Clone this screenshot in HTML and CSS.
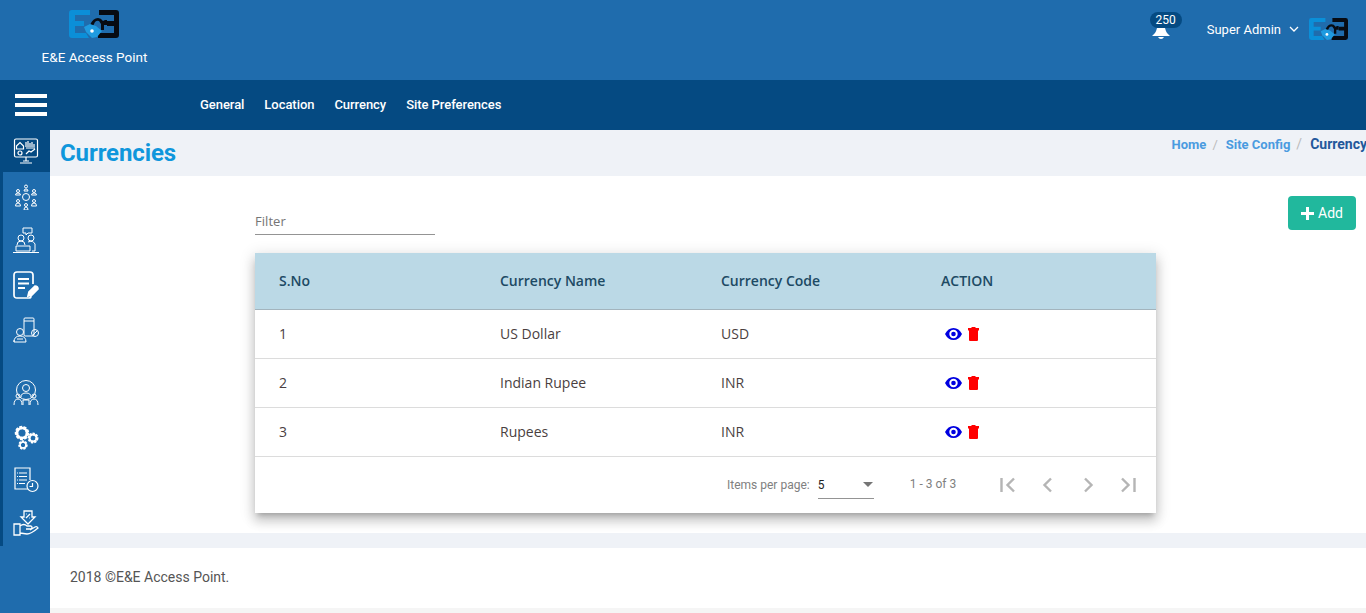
FILE: index.html
```html
<!DOCTYPE html>
<html lang="en">
<head>
  <meta charset="UTF-8" />
  <title>Currencies</title>
  <link rel="stylesheet" href="styles.css">
</head>
<body>
  <svg class="defs" width="0" height="0">
    <symbol id="logo" viewBox="0 0 50 28">
      <path d="M3 0h18v5H6v6h9v5H6v7h11l3 5H3q-3 0-3-3V3q0-3 3-3z" fill="#0b8fd8"/>
      <path d="M30 0h17q3 0 3 3v22q0 3-3 3H29v-5h16v-7h-7v-5h7V5H30z" fill="#070b12"/>
      <path d="M21 15q3-7 8-7 3 0 5 3l2-1h2v5h-3v5h-3v-6l-2-3q-2-1-4 1l-2 4z" fill="#070b12"/>
      <path d="M15 17l6-3 6 2 6 5-5 6-5 1-6-6z" fill="#1f9be0"/>
      <circle cx="23" cy="21" r="1.800" fill="#fff"/>
    </symbol>
  </svg>

  <header class="topbar">
    <div class="brand">
      <svg class="brand-logo"><use href="#logo"/></svg>
      <div class="brand-name">E&amp;E Access Point</div>
    </div>
    <div class="user-area">
      <div class="bell">
        <span class="bell-count">250</span>
        <svg width="18" height="11" viewBox="0 0 18 11"><path d="M5 0h8q1 4 2 5l3 3H0l3-3q1-1 2-5zM6 9h6q-1 2-3 2T6 9z" fill="#fff"/></svg>
      </div>
      <span class="user-name">Super Admin</span>
      <svg class="chev" width="10" height="6" viewBox="0 0 10 6"><path d="M1 1l4 4 4-4" fill="none" stroke="#fff" stroke-width="1.3"/></svg>
      <svg class="user-logo"><use href="#logo"/></svg>
    </div>
  </header>

  <nav class="navbar">
    <div class="burger"><i></i><i></i><i></i></div>
    <a>General</a>
    <a>Location</a>
    <a>Currency</a>
    <a>Site Preferences</a>
  </nav>

  <div class="layout">
    <aside class="sidebar">
      <div class="side-top">
        <svg width="26" height="26" viewBox="0 0 26 26" fill="none" stroke="#fff" stroke-width="1.200"><rect x="1.500" y="1" width="23" height="18" rx="1.500"/><path d="M3.500 8l3.500-3.500L10.500 8v3h-7zM10 23h6M13 19v4M7 25h12"/><circle cx="7" cy="15" r="2"/><path d="M13 9V4M15 9V3M17 9V5M19 9V4M21 9V6M13 16l3-3 2 1 4-3M13 10h9"/></svg>
      </div>
      <div class="side-list">
        <svg width="26" height="26" viewBox="0 0 26 26" fill="none" stroke="#fff"><circle cx="13" cy="13" r="3.500"/><circle cx="13" cy="2.500" r="1.500"/><path d="M11 7q0-2 2-2t2 2z"/><circle cx="5" cy="7" r="1.500"/><path d="M2.500 11q0-2 2.500-2t2.500 2z"/><circle cx="21" cy="7" r="1.500"/><path d="M18.500 11q0-2 2.500-2t2.500 2z"/><circle cx="5" cy="17" r="1.500"/><path d="M2.500 22h5q0-3-2.500-3t-2.500 3z"/><circle cx="21" cy="17" r="1.500"/><path d="M18.500 22h5q0-3-2.500-3t-2.500 3z"/><circle cx="13" cy="21" r="1.500"/><path d="M11 26h4q0-3-2-3t-2 3z"/></svg>
        <svg width="26" height="27" viewBox="0 0 26 27" fill="none" stroke="#fff"><path d="M10 1h9v5h-4l-2 2V6h-3z"/><circle cx="8" cy="11" r="3"/><circle cx="18" cy="11" r="3"/><path d="M4 18q0-4 4-4t4 4M15 15q5-2 7 2v7h-3"/><path d="M3 19h14v5H3zM0 25.500h26"/></svg>
        <svg width="26" height="28" viewBox="0 0 26 28" fill="none" stroke="#fff" stroke-width="1.700"><path d="M18 21v4q0 2-2 2H4q-3 0-3-3V4q0-3 3-3h13q3 0 3 3v9"/><path d="M5 8h11M5 12.500h11M5 17h7" stroke-width="2"/><path d="M15 25l1-4 6-6q3 0 3 3l-6 6z" fill="#fff"/></svg>
        <svg width="26" height="28" viewBox="0 0 26 28" fill="none" stroke="#fff"><rect x="11" y="2" width="10" height="18" rx="1"/><path d="M11 5h10"/><circle cx="22" cy="17" r="3.500"/><path d="M20 19l4-4"/><circle cx="7" cy="16" r="3.500"/><path d="M1 26q0-6 6-6t6 6zM4 23h6M1 26v-2"/></svg>
        <svg class="gap" width="26" height="28" viewBox="0 0 26 28" fill="none" stroke="#fff"><circle cx="13" cy="11" r="9.500"/><circle cx="13" cy="9" r="3.500"/><path d="M8 18q0-4 5-4t5 4"/><circle cx="5" cy="17" r="2"/><circle cx="21" cy="17" r="2"/><path d="M1 26q0-6 4-6t4 6M17 26q0-6 4-6t4 6M10 26v-5h6v5"/></svg>
        <svg width="26" height="26" viewBox="0 0 26 26" fill="#fff"><circle cx="9" cy="9" r="5.500" fill="none" stroke="#fff" stroke-width="3.500" stroke-dasharray="2.600 1.200"/><circle cx="9" cy="9" r="5" fill="none" stroke="#fff" stroke-width="2.500"/><circle cx="20" cy="14" r="4" fill="none" stroke="#fff" stroke-width="3" stroke-dasharray="2 1"/><circle cx="20" cy="14" r="3.500" fill="none" stroke="#fff" stroke-width="2"/><circle cx="10" cy="21" r="3.500" fill="none" stroke="#fff" stroke-width="2.500" stroke-dasharray="2 1"/><circle cx="10" cy="21" r="3" fill="none" stroke="#fff" stroke-width="1.500"/></svg>
        <svg width="26" height="26" viewBox="0 0 26 26" fill="none" stroke="#fff" stroke-width="1.200"><path d="M15 22H2V1h15v12"/><path d="M6 6h8M6 9.500h8M6 13h8M6 16.500h6M4 6h1M4 9.500h1M4 13h1M4 16.500h1"/><circle cx="19.500" cy="19" r="5.500"/><path d="M19.500 16v3.500h-3"/></svg>
        <svg width="26" height="26" viewBox="0 0 26 26" fill="none" stroke="#fff" stroke-width="1.300"><path d="M11 1h8v6h3l-7 7-7-7h3z"/><path d="M13 8l4-4M13 4h.5M16.500 8h.5"/><path d="M1 14h6v11H1zM7 16q4-3 7 0h4q2 1 0 3h-5M7 23l7 1q4 0 11-6q-1-2-3-1l-5 3"/></svg>
      </div>
    </aside>

    <main class="main">
      <div class="page-head">
        <h1>Currencies</h1>
        <ul class="crumbs">
          <li>Home</li>
          <li>Site Config</li>
          <li class="current">Currency</li>
        </ul>
      </div>

      <section class="content">
        <div class="filter-row">
          <div class="filter">Filter</div>
          <button class="add-btn"><svg width="13" height="13" viewBox="0 0 13 13"><path d="M5 0h3v5h5v3H8v5H5V8H0V5h5z" fill="#fff"/></svg>Add</button>
        </div>

        <div class="table-card">
          <div class="row head">
            <div>S.No</div><div>Currency Name</div><div>Currency Code</div><div>ACTION</div>
          </div>
          <div class="row">
            <div>1</div><div>US Dollar</div><div>USD</div>
            <div class="actions">
              <svg width="17" height="12" viewBox="0 0 17 12"><path fill-rule="evenodd" d="M8.500 0Q14 0 17 6q-3 6-8.500 6T0 6Q3 0 8.500 0zM8.500 1.800a4.200 4.200 0 1 0 0 8.400 4.200 4.200 0 0 0 0-8.400z" fill="#0000e0"/><circle cx="8.500" cy="6" r="2.300" fill="#0000e0"/></svg>
              <svg width="11" height="14" viewBox="0 0 11 14"><path d="M3.500 0h4v1H11v2.500H0V1h3.500zM1 3.500h9V13q0 1-1 1H2q-1 0-1-1z" fill="#f00"/></svg>
            </div>
          </div>
          <div class="row">
            <div>2</div><div>Indian Rupee</div><div>INR</div>
            <div class="actions">
              <svg width="17" height="12" viewBox="0 0 17 12"><path fill-rule="evenodd" d="M8.500 0Q14 0 17 6q-3 6-8.500 6T0 6Q3 0 8.500 0zM8.500 1.800a4.200 4.200 0 1 0 0 8.400 4.200 4.200 0 0 0 0-8.400z" fill="#0000e0"/><circle cx="8.500" cy="6" r="2.300" fill="#0000e0"/></svg>
              <svg width="11" height="14" viewBox="0 0 11 14"><path d="M3.500 0h4v1H11v2.500H0V1h3.500zM1 3.500h9V13q0 1-1 1H2q-1 0-1-1z" fill="#f00"/></svg>
            </div>
          </div>
          <div class="row">
            <div>3</div><div>Rupees</div><div>INR</div>
            <div class="actions">
              <svg width="17" height="12" viewBox="0 0 17 12"><path fill-rule="evenodd" d="M8.500 0Q14 0 17 6q-3 6-8.500 6T0 6Q3 0 8.500 0zM8.500 1.800a4.200 4.200 0 1 0 0 8.400 4.200 4.200 0 0 0 0-8.400z" fill="#0000e0"/><circle cx="8.500" cy="6" r="2.300" fill="#0000e0"/></svg>
              <svg width="11" height="14" viewBox="0 0 11 14"><path d="M3.500 0h4v1H11v2.500H0V1h3.500zM1 3.500h9V13q0 1-1 1H2q-1 0-1-1z" fill="#f00"/></svg>
            </div>
          </div>
          <div class="pager">
            <span class="pager-label">Items per page:</span>
            <div class="pager-select"><span>5</span><i class="caret"></i></div>
            <span class="pager-range">1 - 3 of 3</span>
            <div class="pager-btns">
              <svg width="16" height="16" viewBox="0 0 16 16"><path d="M1.500 1v14M14 1.500L7.500 8l6.500 6.500" fill="none" stroke="#b5b5b5" stroke-width="2.400"/></svg>
              <svg width="16" height="16" viewBox="0 0 16 16"><path d="M11 1.500L4.500 8l6.500 6.500" fill="none" stroke="#b5b5b5" stroke-width="2.400"/></svg>
              <svg width="16" height="16" viewBox="0 0 16 16"><path d="M5 1.500L11.500 8 5 14.500" fill="none" stroke="#b5b5b5" stroke-width="2.400"/></svg>
              <svg width="16" height="16" viewBox="0 0 16 16"><path d="M14.500 1v14M2 1.500L8.500 8 2 14.500" fill="none" stroke="#b5b5b5" stroke-width="2.400"/></svg>
            </div>
          </div>
        </div>
      </section>

      <footer class="footer">2018 ©E&amp;E Access Point.</footer>
    </main>
  </div>
</body>
</html>
```

FILE: styles.css
```css
body {
  margin: 0;
  height: 613px;
  overflow: hidden;
  font-family: "Open Sans", sans-serif;
  background: #eff2f7;
}

.defs {
  position: absolute;
}

.topbar {
  height: 80px;
  background: #1f6cad;
  display: flex;
  justify-content: space-between;
  color: #fff;
  font-family: Roboto, sans-serif;
}

.brand {
  width: 189px;
  padding-top: 10px;
  text-align: center;
}

.brand-logo {
  display: block;
  width: 50px;
  height: 28px;
  margin-left: 69px;
}

.brand-name {
  font-size: 13.500px;
  line-height: 17px;
  margin-top: 11px;
}

.user-area {
  display: flex;
  align-items: center;
  height: 58px;
  padding-right: 18px;
}

.bell {
  width: 32px;
  margin: 12px 25px 0 0;
  align-self: flex-start;
  display: flex;
  flex-direction: column;
}

.bell-count {
  background: #054a82;
  border-radius: 9px;
  font-size: 12px;
  line-height: 16px;
  text-align: center;
}

.bell svg {
  margin-left: 2px;
}

.user-name {
  font-size: 13px;
  margin-right: 8px;
}

.chev {
  margin-right: 10px;
}

.user-logo {
  width: 39px;
  height: 22px;
}

.navbar {
  height: 50px;
  background: #054a82;
  display: flex;
  align-items: center;
  gap: 20px;
  padding: 0 0 2px 15px;
  box-sizing: border-box;
  color: #fff;
  font-family: Roboto, sans-serif;
  font-size: 13px;
  font-weight: 500;
  letter-spacing: -0.05px;
}

.burger {
  width: 32px;
  margin-right: 133px;
  margin-top: 2px;
  display: flex;
  flex-direction: column;
  gap: 5px;
}

.burger i {
  height: 4px;
  background: #fff;
}

.layout {
  display: flex;
  height: 483px;
}

.sidebar {
  width: 50px;
  flex-shrink: 0;
  background: #1f6cad;
}

.side-top {
  height: 42px;
  padding-left: 2px;
  box-sizing: border-box;
  background: #054a82;
  display: flex;
  justify-content: center;
  align-items: center;
}

.side-list {
  height: 374px;
  border-left: 3px solid #054a82;
  box-sizing: border-box;
  display: flex;
  flex-direction: column;
  align-items: center;
  padding: 12px 1px 0 0;
  gap: 17px;
}

.side-list .gap {
  margin-top: 18px;
}

.main {
  flex: 1;
  min-width: 0;
}

.page-head {
  height: 46px;
  display: flex;
  justify-content: space-between;
  font-family: Roboto, sans-serif;
}

h1 {
  margin: 8px 0 0 10px;
  font-size: 24px;
  line-height: 30px;
  font-weight: 700;
  color: #0f97dc;
  letter-spacing: -0.1px;
}

.crumbs {
  list-style: none;
  margin: 6px -1px 0 0;
  padding: 0;
  display: flex;
  align-items: baseline;
  height: 17px;
  font-size: 13px;
  line-height: 17px;
  font-weight: 700;
  color: #4a9be0;
}

.crumbs li + li::before {
  content: "/";
  color: #bbb;
  font-weight: 400;
  padding: 0 8px 0 6px;
}

.crumbs .current {
  color: #23589b;
  font-size: 14px;
}

.content {
  height: 357px;
  background: #fff;
  padding: 20px 10px 0 205px;
  box-sizing: border-box;
}

.filter-row {
  display: flex;
  justify-content: space-between;
  height: 57px;
}

.filter {
  width: 180px;
  height: 39px;
  box-sizing: border-box;
  border-bottom: 1px solid #949494;
  padding-top: 16px;
  font-size: 13px;
  line-height: 18px;
  color: #757575;
  letter-spacing: 0.05px;
}

.add-btn {
  width: 68px;
  height: 34px;
  border: none;
  border-radius: 4px;
  background: #21b89d;
  color: #fff;
  font-family: Roboto, sans-serif;
  font-size: 14px;
  display: flex;
  align-items: center;
  justify-content: center;
  gap: 4px;
}

.table-card {
  width: 901px;
  background: #fff;
  box-shadow: 0 5px 5px -3px rgba(0,0,0,.2), 0 8px 10px 1px rgba(0,0,0,.14), 0 3px 14px 2px rgba(0,0,0,.12);
}

.row {
  display: grid;
  grid-template-columns: 221px 221px 220px 1fr;
  align-items: center;
  height: 49px;
  padding: 0 0 2px 24px;
  border-bottom: 1px solid #dcdcdc;
  box-sizing: border-box;
  font-size: 14px;
  color: #4a3f3f;
}

.row.head {
  height: 57px;
  background: #bbd9e6;
  border-bottom-color: #a3b4bd;
  font-weight: 600;
  color: #1d4a64;
}

.actions {
  display: flex;
  align-items: center;
  gap: 6px;
  padding: 2px 0 0 4px;
}

.pager {
  height: 56px;
  display: flex;
  align-items: center;
  font-family: Roboto, sans-serif;
  font-size: 12px;
  color: #808080;
  padding-left: 472px;
}

.pager-label {
  margin-right: 8px;
}

.pager-select {
  width: 56px;
  height: 28px;
  box-sizing: border-box;
  border-bottom: 1px solid #949494;
  display: flex;
  justify-content: space-between;
  align-items: center;
  color: #222;
  padding-right: 1px;
  margin-right: 36px;
}

.caret {
  border-left: 5px solid transparent;
  border-right: 5px solid transparent;
  border-top: 5px solid #757575;
}

.pager-range {
  width: 90px;
  margin-top: -2px;
}

.pager-btns {
  display: flex;
  gap: 24px;
}

.footer {
  margin-top: 15px;
  height: 65px;
  box-sizing: border-box;
  background: #fff;
  border-bottom: 5px solid #f5f5f5;
  padding-left: 20px;
  font-family: Roboto, sans-serif;
  font-size: 14px;
  line-height: 58px;
  color: #555;
}
```
